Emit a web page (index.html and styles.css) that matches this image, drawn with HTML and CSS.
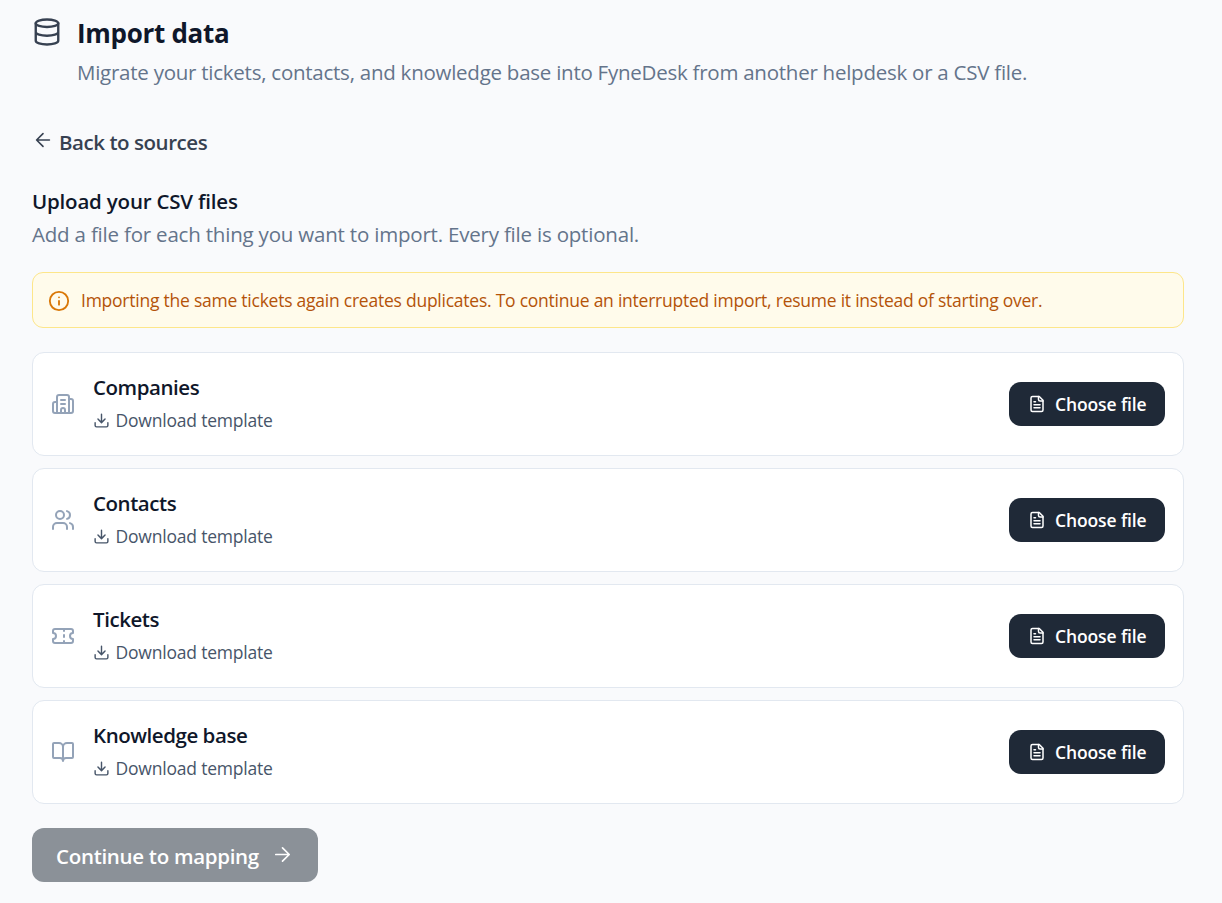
FILE: index.html
```
<!DOCTYPE html>
<html lang="en">

<head>
    <meta charset="UTF-8">
    <meta name="viewport" content="width=device-width, initial-scale=1.0">
    <title>Import data</title>
    <link rel="stylesheet" href="styles.css">
</head>

<body>

    <!-- Icons -->
    <svg class="sprite">
        <symbol id="download" viewBox="0 0 24 24">
            <path d="M12 15V3M21 15v4a2 2 0 0 1-2 2H5a2 2 0 0 1-2-2v-4M7 10l5 5 5-5" />
        </symbol>
        <symbol id="file" viewBox="0 0 24 24">
            <path d="M15 2H6a2 2 0 0 0-2 2v16a2 2 0 0 0 2 2h12a2 2 0 0 0 2-2V7Z" />
            <path d="M14 2v4a2 2 0 0 0 2 2h4M10 9H8M16 13H8M16 17H8" />
        </symbol>
    </svg>

    <header class="page-header">
        <svg class="icon icon-database" viewBox="0 0 24 24">
            <ellipse cx="12" cy="5" rx="9" ry="3" />
            <path d="M3 5v14a9 3 0 0 0 18 0V5M3 12a9 3 0 0 0 18 0" />
        </svg>
        <div>
            <h1>Import data</h1>
            <p class="subtitle">Migrate your tickets, contacts, and knowledge base into FyneDesk from another helpdesk or a CSV file.</p>
        </div>
    </header>

    <main>
        <a class="back">
            <svg class="icon icon-back" viewBox="0 0 24 24"><path d="m12 19-7-7 7-7M19 12H5" /></svg>
            <span>Back to sources</span>
        </a>

        <h2>Upload your CSV files</h2>
        <p class="hint">Add a file for each thing you want to import. Every file is optional.</p>

        <div class="notice">
            <svg class="icon icon-info" viewBox="0 0 24 24">
                <circle cx="12" cy="12" r="10" />
                <path d="M12 16v-4M12 8h.01" />
            </svg>
            <span>Importing the same tickets again creates duplicates. To continue an interrupted import, resume it instead of starting over.</span>
        </div>

        <div class="files">
            <div class="card">
                <svg class="icon icon-type" viewBox="0 0 24 24">
                    <path d="M10 12h4M10 8h4M14 21v-3a2 2 0 0 0-4 0v3" />
                    <path d="M6 10H4a2 2 0 0 0-2 2v7a2 2 0 0 0 2 2h16a2 2 0 0 0 2-2V9a2 2 0 0 0-2-2h-2" />
                    <path d="M6 21V5a2 2 0 0 1 2-2h8a2 2 0 0 1 2 2v16" />
                </svg>
                <div class="card-body">
                    <h3>Companies</h3>
                    <a class="template"><svg class="icon icon-download"><use href="#download" /></svg><span>Download template</span></a>
                </div>
                <button class="choose"><svg class="icon icon-file"><use href="#file" /></svg><span>Choose file</span></button>
            </div>

            <div class="card">
                <svg class="icon icon-type" viewBox="0 0 24 24">
                    <path d="M16 21v-2a4 4 0 0 0-4-4H6a4 4 0 0 0-4 4v2M16 3.128a4 4 0 0 1 0 7.744M22 21v-2a4 4 0 0 0-3-3.87" />
                    <circle cx="9" cy="7" r="4" />
                </svg>
                <div class="card-body">
                    <h3>Contacts</h3>
                    <a class="template"><svg class="icon icon-download"><use href="#download" /></svg><span>Download template</span></a>
                </div>
                <button class="choose"><svg class="icon icon-file"><use href="#file" /></svg><span>Choose file</span></button>
            </div>

            <div class="card">
                <svg class="icon icon-type" viewBox="0 0 24 24">
                    <path d="M2 9a3 3 0 0 1 0 6v2a2 2 0 0 0 2 2h16a2 2 0 0 0 2-2v-2a3 3 0 0 1 0-6V7a2 2 0 0 0-2-2H4a2 2 0 0 0-2 2Z" />
                    <path d="M13 5v2M13 17v2M13 11v2" />
                </svg>
                <div class="card-body">
                    <h3>Tickets</h3>
                    <a class="template"><svg class="icon icon-download"><use href="#download" /></svg><span>Download template</span></a>
                </div>
                <button class="choose"><svg class="icon icon-file"><use href="#file" /></svg><span>Choose file</span></button>
            </div>

            <div class="card">
                <svg class="icon icon-type" viewBox="0 0 24 24">
                    <path d="M12 7v14M3 18a1 1 0 0 1-1-1V4a1 1 0 0 1 1-1h5a4 4 0 0 1 4 4 4 4 0 0 1 4-4h5a1 1 0 0 1 1 1v13a1 1 0 0 1-1 1h-6a3 3 0 0 0-3 3 3 3 0 0 0-3-3z" />
                </svg>
                <div class="card-body">
                    <h3>Knowledge base</h3>
                    <a class="template"><svg class="icon icon-download"><use href="#download" /></svg><span>Download template</span></a>
                </div>
                <button class="choose"><svg class="icon icon-file"><use href="#file" /></svg><span>Choose file</span></button>
            </div>
        </div>

        <button class="continue" disabled>
            <span>Continue to mapping</span>
            <svg class="icon icon-next" viewBox="0 0 24 24"><path d="M5 12h14M12 5l7 7-7 7" /></svg>
        </button>
    </main>

</body>

</html>
```

FILE: styles.css
```
* {
    margin: 0;
    padding: 0;
    box-sizing: border-box;
}

body {
    font-family: 'Segoe UI', 'Open Sans', sans-serif;
    background-color: #f9fafc;
    color: #0f172a;
    padding: 13px 38px 0 32px;
    height: 903px;
    overflow: hidden;
    white-space: nowrap;
}

.sprite {
    display: none;
}

.icon {
    flex-shrink: 0;
    fill: none;
    stroke: currentColor;
    stroke-width: 2;
    stroke-linecap: round;
    stroke-linejoin: round;
}

/* Header */
.page-header {
    display: flex;
    gap: 15px;
}

.icon-database {
    width: 30px;
    height: 30px;
    margin-top: 4px;
    stroke-width: 1.9;
    color: #374151;
}

h1 {
    font-size: 26px;
    font-weight: 700;
    line-height: 40px;
    letter-spacing: -0.3px;
}

.subtitle,
.hint {
    font-size: 20.5px;
    line-height: 32px;
    letter-spacing: -0.25px;
    color: #64748b;
}

.subtitle {
    margin-top: 3px;
}

.back {
    display: flex;
    align-items: center;
    gap: 5px;
    width: max-content;
    margin-top: 38px;
    font-size: 20.5px;
    font-weight: 600;
    line-height: 32px;
    letter-spacing: -0.45px;
    color: #374151;
}

.icon-back {
    width: 22px;
    height: 22px;
    margin-top: -5px;
    stroke-width: 1.75;
}

h2,
h3 {
    font-size: 20.5px;
    font-weight: 600;
    line-height: 33px;
    letter-spacing: -0.45px;
}

h2 {
    margin-top: 27px;
    letter-spacing: -0.2px;
}

.hint {
    letter-spacing: -0.2px;
}

/* Warning */
.notice {
    display: flex;
    align-items: center;
    gap: 11.5px;
    height: 56px;
    margin-top: 22px;
    padding: 0 15px;
    border: 1px solid #fde68a;
    border-radius: 11px;
    background-color: #fffbeb;
    font-size: 17.5px;
    letter-spacing: -0.24px;
    color: #b45309;
}

.icon-info {
    width: 22px;
    height: 22px;
    margin: 2px 0 0 -0.5px;
    color: #d97706;
}

/* File cards */
.files {
    display: grid;
    gap: 12px;
    margin-top: 24px;
}

.card {
    display: flex;
    align-items: center;
    gap: 18px;
    height: 104px;
    padding: 0 18px;
    border: 1px solid #e2e8f0;
    border-radius: 12px;
    background-color: #fff;
}

.icon-type {
    width: 24px;
    height: 24px;
    color: #94a3b8;
}

.card-body {
    flex: 1;
    padding-bottom: 2px;
}

.template {
    display: flex;
    align-items: center;
    gap: 5.5px;
    font-size: 17.5px;
    line-height: 32px;
    letter-spacing: -0.2px;
    color: #475569;
}

.icon-download {
    width: 17px;
    height: 17px;
    margin-top: 1px;
}

button {
    display: flex;
    align-items: center;
    border: none;
    font-family: inherit;
    font-weight: 600;
    color: #fff;
}

.choose {
    gap: 9px;
    width: 156px;
    height: 44px;
    padding-left: 19px;
    border-radius: 12px;
    background-color: #1f2937;
    font-size: 17.5px;
    letter-spacing: -0.12px;
}

.icon-file {
    width: 18px;
    height: 18px;
}

.continue {
    gap: 12px;
    width: 286px;
    height: 54px;
    margin-top: 24px;
    padding: 2px 0 0 24px;
    border-radius: 12px;
    background-color: #8b9198;
    font-size: 20.5px;
    letter-spacing: -0.3px;
}

.icon-next {
    width: 23px;
    height: 23px;
    margin-top: -4px;
    stroke-width: 1.75;
}
```
